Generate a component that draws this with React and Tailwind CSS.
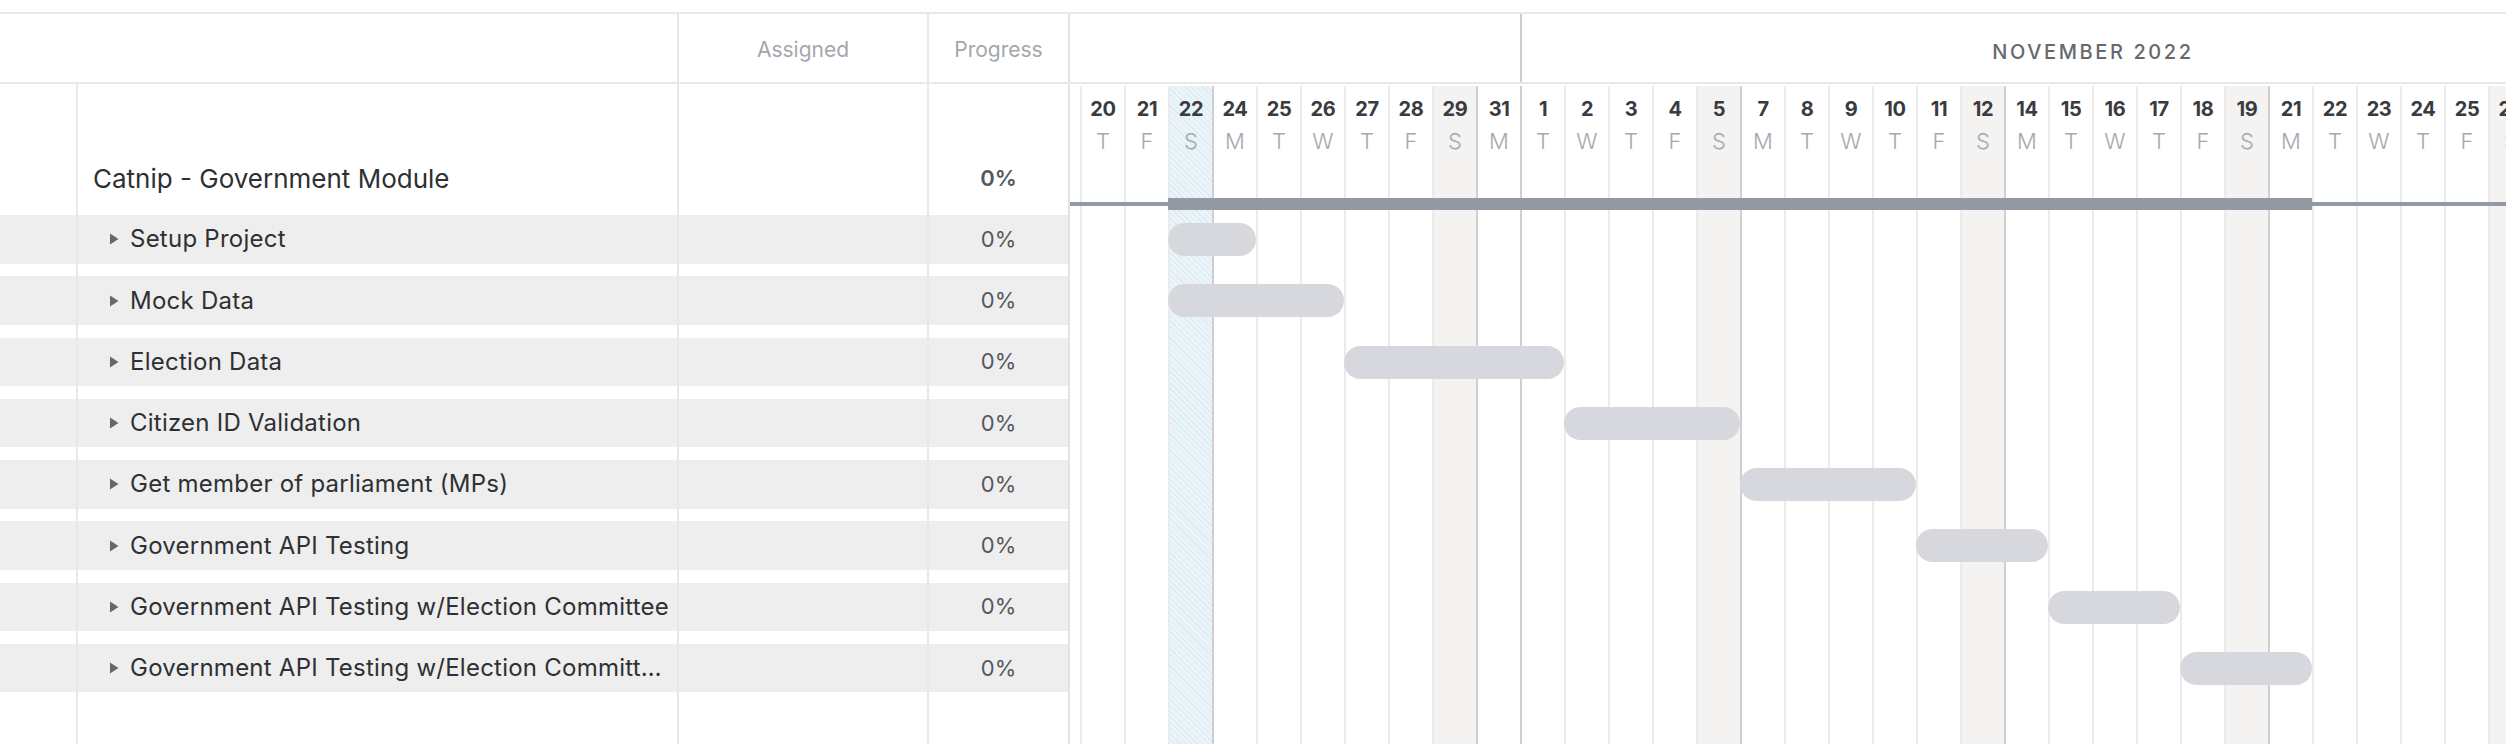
import React from "react";

const days = [
  ["20", "T", 10], ["21", "F", 10], ["22", "S", 10], ["24", "M", 10], ["25", "T", 10],
  ["26", "W", 10], ["27", "T", 10], ["28", "F", 10], ["29", "S", 10], ["31", "M", 10],
  ["1", "T", 11], ["2", "W", 11], ["3", "T", 11], ["4", "F", 11], ["5", "S", 11],
  ["7", "M", 11], ["8", "T", 11], ["9", "W", 11], ["10", "T", 11], ["11", "F", 11],
  ["12", "S", 11], ["14", "M", 11], ["15", "T", 11], ["16", "W", 11], ["17", "T", 11],
  ["18", "F", 11], ["19", "S", 11], ["21", "M", 11], ["22", "T", 11], ["23", "W", 11],
  ["24", "T", 11], ["25", "F", 11], ["26", "S", 11],
];

const tasks = [
  { name: "Setup Project", start: 2, len: 2 },
  { name: "Mock Data", start: 2, len: 4 },
  { name: "Election Data", start: 6, len: 5 },
  { name: "Citizen ID Validation", start: 11, len: 4 },
  { name: "Get member of parliament (MPs)", start: 15, len: 4 },
  { name: "Government API Testing", start: 19, len: 3 },
  { name: "Government API Testing w/Election Committee", start: 22, len: 3 },
  { name: "Government API Testing w/Election Committee (Round 2)", start: 25, len: 3 },
];

const COL = 44;
const LEAD = 10;

function DayColumn({ d, i }) {
  const [num, letter, month] = d;
  const prev = days[i - 1];
  const isSat = letter === "S";
  const isToday = i === 2;
  const darkLine = (prev && prev[1] === "S") || (month === 11 && num === "1");
  let bg = "bg-white";
  if (isSat) bg = "bg-[#f4f3f2]";
  if (isToday)
    bg = "bg-[repeating-linear-gradient(45deg,#eaf4f9_0px,#eaf4f9_3px,#dcebf3_3px,#dcebf3_4px)]";
  return (
    <div
      className={`w-[44px] shrink-0 h-full flex flex-col items-center border-l-2 ${
        darkLine ? "border-[#cfcfd1]" : "border-[#ebebeb]"
      } ${bg}`}
    >
      <div className="mt-[11px] h-[24px] leading-[24px] text-[20px] font-bold tracking-[-0.02em] text-[#3a3b40]">
        {num}
      </div>
      <div className="mt-[8px] h-[24px] leading-[24px] text-[22px] font-light text-[#a4a8ae]">
        {letter}
      </div>
    </div>
  );
}

function Triangle() {
  return (
    <svg width="10" height="12" viewBox="0 0 10 12" className="shrink-0">
      <path d="M1 0.5 L9.5 6 L1 11.5 Z" fill="#666769" />
    </svg>
  );
}

export default function App() {
  return (
    <div className="w-[2506px] h-[744px] overflow-hidden bg-white pt-[12px] font-['Inter',sans-serif]">
      <div className="border-t-2 border-[#e8e8e8] flex flex-col h-[732px]">
        {/* Header */}
        <div className="flex h-[70px] border-b-2 border-[#e8e8e8] shrink-0">
          <div className="w-[679px] shrink-0 border-r-2 border-[#e8e8e8]" />
          <div className="w-[250px] shrink-0 border-r-2 border-[#e8e8e8] pt-[4px] flex items-center justify-center text-[21px] text-[#a2a7ae]">
            Assigned
          </div>
          <div className="w-[139px] shrink-0 pt-[4px] flex items-center justify-center text-[21px] text-[#a2a7ae]">
            Progress
          </div>
          <div className="flex-1 border-l-2 border-[#e3e3e3] flex">
            <div className="w-[450px] shrink-0" />
            <div className="w-[1144px] shrink-0 border-l-2 border-[#cccccc] pt-[7px] flex items-center justify-center text-[20px] font-medium tracking-[0.13em] text-[#66696e]">
              NOVEMBER 2022
            </div>
          </div>
        </div>

        {/* Body */}
        <div className="flex flex-1 min-h-0">
          {/* Left table */}
          <div className="w-[1068px] shrink-0 flex flex-col">
            <div className="flex h-[131px] shrink-0">
              <div className="w-[78px] shrink-0 border-r-2 border-[#e8e8e8]" />
              <div className="w-[601px] shrink-0 border-r-2 border-[#e8e8e8] pt-[57px] pl-[15px] flex items-center text-[26px] text-[#2f3033]">
                Catnip - Government Module
              </div>
              <div className="w-[250px] shrink-0 border-r-2 border-[#e8e8e8]" />
              <div className="w-[139px] shrink-0 pt-[57px] flex items-center justify-center text-[22px] font-semibold text-[#55585d]">
                0%
              </div>
            </div>
            {tasks.map((t, i) => (
              <div key={i} className="flex h-[61.25px] shrink-0">
                <div className="w-[78px] shrink-0 border-r-2 border-[#e8e8e8]">
                  <div className="h-[48.5px] bg-[#eeeeee]" />
                </div>
                <div className="w-[601px] shrink-0 border-r-2 border-[#e8e8e8]">
                  <div className="h-[48.5px] bg-[#eeeeee] flex items-center pl-[31px] pr-[4px] gap-[11px] text-[24px] tracking-[0.01em] text-[#2f3033]">
                    <Triangle />
                    <span className="truncate">{t.name}</span>
                  </div>
                </div>
                <div className="w-[250px] shrink-0 border-r-2 border-[#e8e8e8]">
                  <div className="h-[48.5px] bg-[#eeeeee]" />
                </div>
                <div className="w-[139px] shrink-0">
                  <div className="h-[48.5px] bg-[#eeeeee] flex items-center justify-center text-[22px] text-[#55585d]">
                    0%
                  </div>
                </div>
              </div>
            ))}
            <div className="flex flex-1">
              <div className="w-[78px] shrink-0 border-r-2 border-[#e8e8e8]" />
              <div className="w-[601px] shrink-0 border-r-2 border-[#e8e8e8]" />
              <div className="w-[250px] shrink-0 border-r-2 border-[#e8e8e8]" />
              <div className="w-[139px] shrink-0" />
            </div>
          </div>

          {/* Gantt */}
          <div className="flex-1 border-l-2 border-[#e3e3e3] grid overflow-hidden">
            {/* columns layer */}
            <div className="col-start-1 row-start-1 flex pt-[2px] h-full">
              <div className="w-[10px] shrink-0" />
              {days.map((d, i) => (
                <DayColumn key={i} d={d} i={i} />
              ))}
            </div>
            {/* bars layer */}
            <div className="col-start-1 row-start-1 flex flex-col pt-[114px]">
              <div className="flex items-center h-[12px] shrink-0">
                <div className="h-[4px] bg-[#939aa3] shrink-0" style={{ width: LEAD + 2 * COL }} />
                <div className="h-[12px] bg-[#939aa3] shrink-0" style={{ width: 26 * COL }} />
                <div className="h-[4px] bg-[#939aa3] flex-1" />
              </div>
              <div className="h-[5px] shrink-0" />
              {tasks.map((t, i) => (
                <div key={i} className="h-[61.25px] shrink-0 flex pt-[8px]">
                  <div className="shrink-0" style={{ width: LEAD + t.start * COL }} />
                  <div
                    className="h-[33px] rounded-full bg-[#d7d8dd] shrink-0"
                    style={{ width: t.len * COL }}
                  />
                </div>
              ))}
            </div>
          </div>
        </div>
      </div>
    </div>
  );
}
